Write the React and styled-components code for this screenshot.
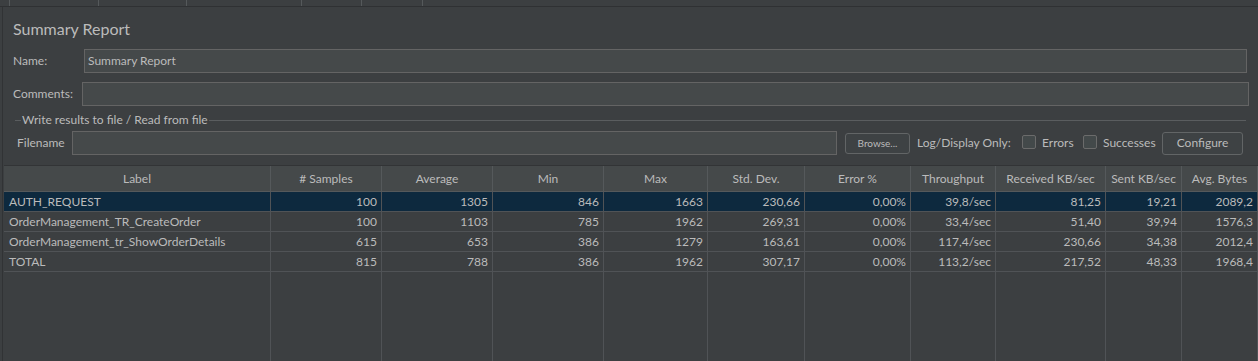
import React from 'react';
import styled, { createGlobalStyle } from 'styled-components';

const GlobalStyle = createGlobalStyle`
  html, body { margin: 0; padding: 0; background: #3c3f41; }
  body { font-family: Lato, "Noto Sans", sans-serif; font-size: 12px; color: #bbbbbb; }
  * { box-sizing: border-box; }
`;

const Root = styled.div`
  width: 1258px;
  height: 361px;
  overflow: hidden;
  display: flex;
  flex-direction: column;
  background: #3c3f41;
`;

const TabStrip = styled.div`
  height: 7px;
  display: flex;
  border-bottom: 1px solid #2f3133;
  flex: none;
`;

const Tab = styled.div`
  width: ${(p) => p.$w}px;
  height: 6px;
  border-right: 1px solid #55595b;
  flex: none;
`;

const Main = styled.div`
  flex: 1;
  min-height: 0;
  margin-left: 2px;
  border-left: 1px solid #313335;
  display: flex;
  flex-direction: column;
`;

const Form = styled.div`
  padding: 12px 9px 0 10px;
  display: flex;
  flex-direction: column;
  flex: none;
`;

const Title = styled.div`
  font-size: 16px;
  line-height: 20px;
  height: 20px;
  color: #bbbbbb;
  margin-bottom: 10px;
`;

const FieldRow = styled.div`
  display: flex;
  align-items: center;
  height: 24px;
  margin-bottom: ${(p) => p.$mb || 0}px;
`;

const FieldLabel = styled.span`
  width: ${(p) => p.$w}px;
  flex: none;
  line-height: 16px;
`;

const TextInput = styled.div`
  flex: ${(p) => (p.$w ? 'none' : 1)};
  width: ${(p) => (p.$w ? `${p.$w}px` : 'auto')};
  height: 24px;
  margin-right: ${(p) => p.$mr || 0}px;
  background: #45494a;
  border: 1px solid #646464;
  padding: 0 3px;
  display: flex;
  align-items: center;
  color: #bbbbbb;
  line-height: 16px;
`;

const FieldSet = styled.fieldset`
  margin: 6px 3px 0 2px;
  padding: 3px 0 0 2px;
  border: none;
  border-top: 1px solid #5a5d5f;
  min-width: 0;
`;

const Legend = styled.legend`
  margin-left: 4px;
  padding: 0 1px;
  line-height: 16px;
  color: #bbbbbb;
`;

const FileRow = styled.div`
  display: flex;
  align-items: center;
  height: 24px;
`;

const Button = styled.button`
  font-family: inherit;
  font-size: ${(p) => p.$fs || 12}px;
  color: #bbbbbb;
  background: #3e4244;
  border: 1px solid #626566;
  border-radius: 3px;
  width: ${(p) => p.$w}px;
  height: ${(p) => p.$h}px;
  margin-left: ${(p) => p.$ml || 0}px;
  padding: 0;
  flex: none;
  line-height: 1;
`;

const InlineText = styled.span`
  width: ${(p) => p.$w}px;
  margin-left: ${(p) => p.$ml || 0}px;
  line-height: 16px;
  white-space: nowrap;
  flex: none;
`;

const CheckBox = styled.span`
  width: 14px;
  height: 14px;
  border: 1px solid #6b6b6b;
  background: #43494a;
  border-radius: 2px;
  margin-top: -3px;
  flex: none;
`;

const Table = styled.div`
  flex: 1;
  min-height: 0;
  margin: 10px 0 0 1px;
  border-top: 1px solid #323436;
  display: grid;
  grid-template-columns: 267px 111px 111px 111px 104px 97px 106px 85px 110px 76px 1fr;
  grid-template-rows: 26px repeat(4, 20px) 1fr;
`;

const HeadCell = styled.div`
  background: #45494a;
  border-right: 1px solid #55595b;
  border-bottom: 1px solid #55595b;
  display: flex;
  align-items: center;
  justify-content: center;
  white-space: nowrap;
  color: #bbbbbb;
`;

const Cell = styled.div`
  background: ${(p) => (p.$sel ? '#0d293e' : '#3c3f41')};
  border-right: 1px solid #505356;
  border-bottom: 1px solid #505356;
  display: flex;
  align-items: center;
  justify-content: ${(p) => (p.$left ? 'flex-start' : 'flex-end')};
  padding: 0 ${(p) => (p.$left ? 0 : 4)}px 0 ${(p) => (p.$left ? 5 : 0)}px;
  white-space: nowrap;
  overflow: hidden;
  color: #bbbbbb;
`;

const FillCell = styled.div`
  border-right: 1px solid #505356;
`;

const columns = ['Label', '# Samples', 'Average', 'Min', 'Max', 'Std. Dev.', 'Error %', 'Throughput', 'Received KB/sec', 'Sent KB/sec', 'Avg. Bytes'];

const rows = [
  ['AUTH_REQUEST', '100', '1305', '846', '1663', '230,66', '0,00%', '39,8/sec', '81,25', '19,21', '2089,2'],
  ['OrderManagement_TR_CreateOrder', '100', '1103', '785', '1962', '269,31', '0,00%', '33,4/sec', '51,40', '39,94', '1576,3'],
  ['OrderManagement_tr_ShowOrderDetails', '615', '653', '386', '1279', '163,61', '0,00%', '117,4/sec', '230,66', '34,38', '2012,4'],
  ['TOTAL', '815', '788', '386', '1962', '307,17', '0,00%', '113,2/sec', '217,52', '48,33', '1968,4'],
];

const tabs = [10, 89, 88, 115, 60, 61];

export default function App() {
  return (
    <>
      <GlobalStyle />
      <Root>
        <TabStrip>
          {tabs.map((w, i) => (
            <Tab key={i} $w={w} />
          ))}
        </TabStrip>
        <Main>
          <Form>
            <Title>Summary Report</Title>
            <FieldRow $mb={9}>
              <FieldLabel $w={71}>Name:</FieldLabel>
              <TextInput $mr={2}>Summary Report</TextInput>
            </FieldRow>
            <FieldRow>
              <FieldLabel $w={69}>Comments:</FieldLabel>
              <TextInput />
            </FieldRow>
            <FieldSet>
              <Legend>Write results to file / Read from file</Legend>
              <FileRow>
                <FieldLabel $w={55}>Filename</FieldLabel>
                <TextInput $w={765} />
                <Button $w={65} $h={21} $fs={10} $ml={8}>Browse...</Button>
                <InlineText $w={105} $ml={7}>Log/Display Only:</InlineText>
                <CheckBox />
                <InlineText $w={41} $ml={6}>Errors</InlineText>
                <CheckBox />
                <InlineText $w={59} $ml={6}>Successes</InlineText>
                <Button $w={81} $h={23}>Configure</Button>
              </FileRow>
            </FieldSet>
          </Form>
          <Table>
            {columns.map((c) => (
              <HeadCell key={c}>{c}</HeadCell>
            ))}
            {rows.map((r, ri) =>
              r.map((v, ci) => (
                <Cell key={`${ri}-${ci}`} $sel={ri === 0} $left={ci === 0}>
                  {v}
                </Cell>
              ))
            )}
            {columns.map((c) => (
              <FillCell key={`f-${c}`} />
            ))}
          </Table>
        </Main>
      </Root>
    </>
  );
}
